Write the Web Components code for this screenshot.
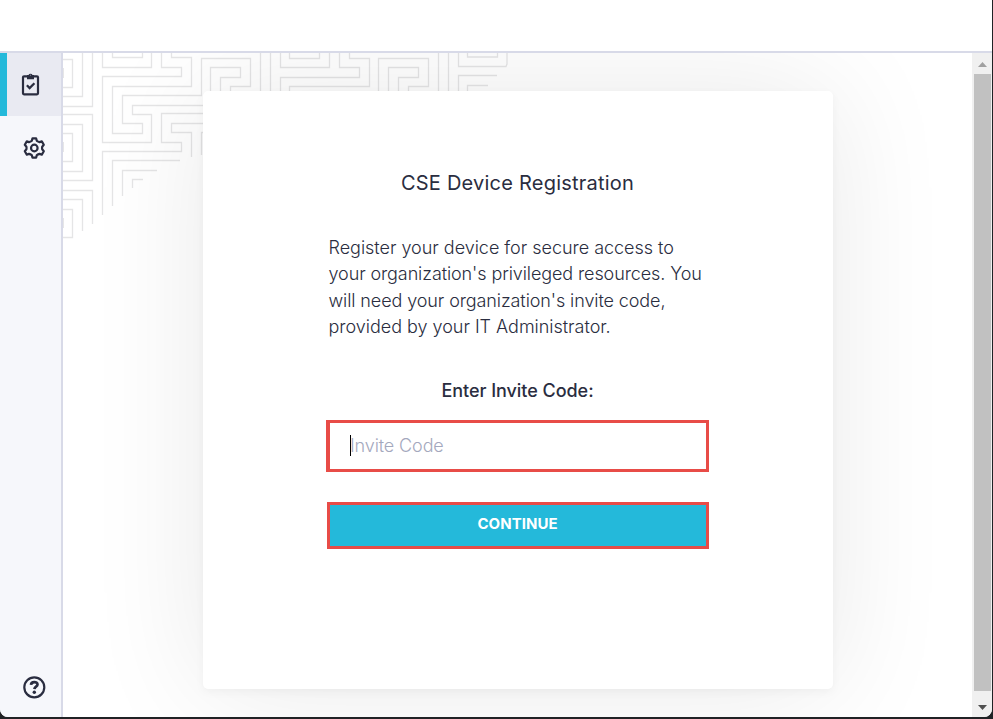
<!DOCTYPE html>
<html lang="en"><head><meta charset="utf-8"><title>CSE Device Registration</title>
<style>html,body{margin:0;height:100%;overflow:hidden;background:#202225}body{font-family:Inter,"Liberation Sans",sans-serif;color:#2a2d40}.wide{letter-spacing:-.02px}</style></head>
<body>
<app-window>
  <side-nav slot="nav"></side-nav>
  <maze-backdrop slot="backdrop"></maze-backdrop>
  <registration-card>
    <span slot="title">CSE Device Registration</span>
    <span slot="intro"><span class="wide">Register your device for secure access to</span><br>your organization's privileged resources. You<br>will need your organization's invite code,<br><span class="wide">provided by your IT Administrator.</span></span>
    <code-field slot="field" placeholder="Invite Code">Enter Invite Code:</code-field>
    <action-button slot="action">CONTINUE</action-button>
  </registration-card>
  <scroll-rail slot="scroll"></scroll-rail>
</app-window>
<script>
const define=(name,html)=>customElements.define(name,class extends HTMLElement{
  constructor(){super();this.attachShadow({mode:'open'}).innerHTML=html;}
  connectedCallback(){const p=this.shadowRoot.querySelector('.placeholder');if(p)p.textContent=this.getAttribute('placeholder');}
});
define('app-window',`<style>
:host{display:flex;flex-direction:column;box-sizing:border-box;width:992px;height:717px;background:#fff;border-radius:0 0 8px 8px;overflow:hidden}
header{height:51px;border-bottom:2px solid #d8dae8;flex:none}
.body{display:flex;flex:1;min-height:0}
main{position:relative;flex:1;min-width:0;overflow:hidden;padding:38px 0 0 140px}
slot[name=backdrop]::slotted(*){position:absolute;left:0;top:0}
</style><header></header><div class="body"><slot name="nav"></slot><main><slot name="backdrop"></slot><slot></slot></main><slot name="scroll"></slot></div>`);
define('side-nav',`<style>
:host{display:flex;flex-direction:column;box-sizing:border-box;width:63px;background:#f6f7fb;border-right:2px solid #d8dae8;flex:none}
.item{height:63px;display:flex;align-items:center;justify-content:center;box-sizing:border-box;padding:0 0 0 7px}
.on{background:#e9eaf2;border-left:7px solid #24b9da;padding:0 0 1px 0;justify-content:flex-start}
.on svg{margin-left:12px}.help{margin-top:auto;height:60px;padding-bottom:0}svg{display:block;fill:none;stroke:#2a2d40;stroke-width:2.200}
</style>
<div class="item on"><svg width="24" height="24" viewBox="0 0 24 24"><rect x="4" y="4.300" width="15" height="18" rx="1"/><path d="M8 3H9.500a2.200 2.200 0 0 1 4 0H15V7.300H8Z" fill="#2a2d40" stroke="none"/><circle cx="11.500" cy="3.200" r=".6" fill="#858899" stroke="none"/><path d="m7.900 13.300 2.700 2.700 4.800-4.800" stroke-width="2.300"/></svg></div>
<div class="item"><svg width="24" height="24" viewBox="0 0 24 24"><path transform="translate(.3 0)" stroke-linejoin="round" d="M10.200 2.400H13.800L14.500 4.800Q15.800 5.700 17.300 6.100L19.500 5.400 21.500 8.800 19.900 10.700Q19.600 12 19.900 13.300L21.500 15.200 19.500 18.600 17.300 17.900Q15.800 18.300 14.500 19.200L13.800 21.600H10.200L9.500 19.200Q8.200 18.300 6.700 17.900L4.500 18.600 2.500 15.200 4.100 13.300Q4.400 12 4.100 10.700L2.500 8.800 4.500 5.400 6.700 6.100Q8.200 5.700 9.500 4.800Z"/><circle cx="12.300" cy="12" r="3.300"/></svg></div>
<div class="item help"><svg width="24" height="24" viewBox="0 0 24 24"><circle cx="12.300" cy="12.300" r="10"/><path d="M9 9.900c.2-3.800 6.500-3.700 6.500-.4 0 2.200-3 2.200-3.100 4.600" stroke-width="2.700"/><circle cx="12.300" cy="17.200" r="1.700" fill="#2a2d40" stroke="none"/></svg></div>`);
define('maze-backdrop',`<style>:host{display:block}svg{display:block;fill:none;stroke:#e5e5e6;stroke-width:1.3}</style>
<svg width="450" height="190" viewBox="63 53 450 190"><path d="M63 59.500H72.500V87.500H63M82.500 53V96.500H63M92.500 53V106.500H63M63 114.500H92.500V180.500H63M63 124.500H82.500V171.500H63M63 133.500H72.500V161.500H63M63 190.500H92.500V224M63 199.500H82.500V231M63 209.500H72.500V237.500H63M63.300 68V78M63.300 142V152M63.300 218V228
M102.500 53V67.500H151.500V53M112.500 53V57.500H142.500V53M161.500 53V67.500H181.500V76.500H102.500V142.500H151.500V114.500H132.500V105.500H210
M171.500 53V57.500H191.500V86.500H112.500V133.500H142.500V123.500H122.500V95.500H201.500V58.500H250.500V86.500H230.500V95M210.500 95V67.500H240.500V77.500H220.500V95
M260.500 53V95M270.500 53V95M289.500 53V58.500H319.500V53M280.500 53V67.500H329.500V53M339.500 53V67.500H359.500V77.500H280.500V95M349.500 53V58.500H369.500V86.500H289.500V95M378.500 95V58.500H428.500V86.500H408.500V95M388.500 95V67.500H418.500V77.500H398.500V95M438.500 53V95M448.500 53V95M458.500 53V66.500H506L507 64V53M467.500 53V57H497.500V53M458.500 95V75.500H497M467.500 95V85.500H488
M205 113.500H161.500V142.500H181.500V151.500H102.500V215M205 123.500H171.500V132.500H191.500V157M205 132.500H201.500V155M180 160.500H112.500V206M157 170.500H122.500V196M143 179.500H132.500V188"/></svg>`);
define('registration-card',`<style>
:host{display:block;position:relative;box-sizing:border-box;width:630px;height:598px;background:#fff;border-radius:5px;box-shadow:0 0 120px rgba(0,0,0,.09),0 3px 10px rgba(0,0,0,.04);padding:78px 123px 0}
h1{font-size:20px;line-height:28px;font-weight:400;letter-spacing:.22px;margin:0 0 38px;text-align:center}
h1 ::slotted(*){margin-right:1px}
p{font-size:18px;line-height:26.400px;font-weight:300;margin:0 0 38px 2.500px;white-space:nowrap}
p ::slotted(*){letter-spacing:-.1px}
</style><h1><slot name="title"></slot></h1><p><slot name="intro"></slot></p><slot name="field"></slot><slot name="action"></slot>`);
define('code-field',`<style>
:host{display:block;width:383px}label{display:block;text-align:center;font-size:18px;font-weight:500;letter-spacing:-.04px;line-height:24px;margin-bottom:17px}
.box{box-sizing:border-box;height:52px;border:3px solid #e84c47;display:flex;align-items:center;padding-left:20px;font-size:18px;font-weight:300;letter-spacing:-.12px;color:#a4a8bd;background:#fff;border-left-width:4px}
.caret{width:1px;height:21px;background:#000}.placeholder{margin-left:-1px}
</style><label><slot></slot></label><div class="box"><i class="caret"></i><span class="placeholder"></span></div>`);
define('action-button',`<style>
:host{display:block;padding:30px 0 0 1px}button{display:block;box-sizing:border-box;width:382px;height:47px;padding:0 1px 3px 0;border:3px solid #e84c47;border-radius:0;background:#24b9da;color:#fff;font:700 15px Inter,sans-serif;letter-spacing:.04px}
</style><button><slot></slot></button>`);
define('scroll-rail',`<style>
:host{display:flex;flex-direction:column;box-sizing:border-box;width:20px;background:#f0f0f0;flex:none;padding:0 1px 0 2px}
.cap{height:21px;padding-top:2px;box-sizing:border-box;display:flex;justify-content:center;align-items:center;flex:none}.thumb{height:617px;background:#c1c1c1}.down{height:26px;padding-top:6px}
</style><div class="cap"><svg width="9" height="5"><path d="M0 5 4.500 0 9 5Z" fill="#a0a0a0"/></svg></div><div class="thumb"></div><div class="cap down"><svg width="9" height="5"><path d="M0 0H9L4.500 5Z" fill="#505050"/></svg></div>`);
</script></body></html>
